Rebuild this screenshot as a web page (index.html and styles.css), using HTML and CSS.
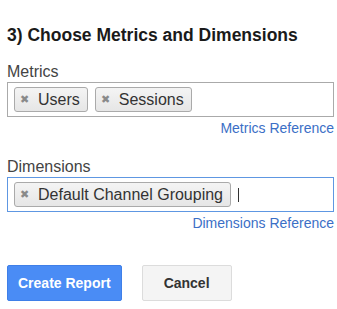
FILE: index.html
```html
<!DOCTYPE html>
<html lang="en">
<head>
    <meta charset="UTF-8">
    <meta name="viewport" content="width=device-width, initial-scale=1.0">
    <title>Choose Metrics and Dimensions</title>
    <link rel="stylesheet" href="styles.css">
</head>
<body>
    <div class="step">
        <h2>3) Choose Metrics and Dimensions</h2>

        <div class="field">
            <label class="field-label">Metrics</label>
            <div class="chips">
                <span class="chip"><span class="chip-x">&#10006;</span>Users</span>
                <span class="chip"><span class="chip-x">&#10006;</span>Sessions</span>
            </div>
            <div class="field-ref"><a href="#">Metrics Reference</a></div>
        </div>

        <div class="field field-dims">
            <label class="field-label">Dimensions</label>
            <div class="chips focused">
                <span class="chip"><span class="chip-x">&#10006;</span>Default Channel Grouping</span>
                <span class="caret"></span>
            </div>
            <div class="field-ref"><a href="#">Dimensions Reference</a></div>
        </div>

        <div class="actions">
            <button class="btn btn-primary">Create Report</button>
            <button class="btn btn-cancel">Cancel</button>
        </div>
    </div>
</body>
</html>
```

FILE: styles.css
```css
body {
    margin: 0;
    padding: 0;
    background: #fff;
    font-family: 'Liberation Sans', Arial, sans-serif;
    color: #333;
}
.step {
    padding: 25px 3px 0 7px;
}
.step h2 {
    margin: 0 0 18px 0;
    font-size: 17.5px;
    line-height: 20px;
    font-weight: bold;
    color: #1a1a1a;
}
.field-label {
    display: block;
    margin-bottom: 1px;
    font-size: 16px;
    line-height: 18px;
    color: #444;
}
.chips {
    display: flex;
    align-items: center;
    gap: 7px;
    border: 1px solid #aaa;
    padding: 4px 6px;
    height: 25px;
}
.chips.focused {
    border-color: #5e97e2;
}
.chip {
    display: flex;
    align-items: center;
    height: 23px;
    padding: 0 7px 0 5px;
    border: 1px solid #aaa;
    border-radius: 3px;
    background: linear-gradient(#f4f4f4, #e6e6e6);
    font-size: 16px;
    color: #333;
}
.chip-x {
    font-size: 11px;
    color: #8a8a8a;
    margin-right: 9px;
}
.caret {
    width: 1px;
    height: 14px;
    background: #333;
}
.field-ref {
    text-align: right;
    margin-top: 3px;
    font-size: 14px;
    line-height: 16px;
}
.field-ref a {
    color: #3b6fc6;
    text-decoration: none;
}
.field-dims {
    margin-top: 22px;
}
.actions {
    display: flex;
    gap: 20px;
    margin-top: 34px;
}
.btn {
    height: 36px;
    border-radius: 2px;
    font-family: 'Liberation Sans', Arial, sans-serif;
    font-size: 14px;
    font-weight: bold;
    cursor: pointer;
}
.btn-primary {
    padding: 0 10px;
    background: #4a8cf5;
    border: 1px solid #3f7fe8;
    color: #fff;
}
.btn-cancel {
    width: 90px;
    background: #f4f4f4;
    border: 1px solid #dcdcdc;
    color: #333;
}
```
